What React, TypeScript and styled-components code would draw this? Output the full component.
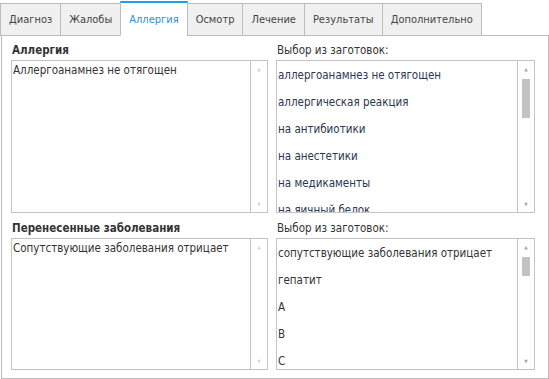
import React from 'react';
import styled, { createGlobalStyle } from 'styled-components';

const GlobalStyle = createGlobalStyle`
  html, body {
    margin: 0;
    padding: 0;
    background: #fff;
  }
  body {
    font-family: "DejaVu Sans Condensed", "DejaVu Sans", sans-serif;
    font-size: 11.5px;
    color: #333;
  }
`;

const tabs = ['Диагноз', 'Жалобы', 'Аллергия', 'Осмотр', 'Лечение', 'Результаты', 'Дополнительно'];

const sections = [
  {
    title: 'Аллергия',
    text: 'Аллергоанамнез не отягощен',
    height: 153,
    thumb: { top: 18, height: 39 },
    items: ['аллергоанамнез не отягощен', 'аллергическая реакция', 'на антибиотики', 'на анестетики', 'на медикаменты', 'на яичный белок'],
    navy: true,
  },
  {
    title: 'Перенесенные заболевания',
    text: 'Сопутствующие заболевания отрицает',
    height: 132,
    thumb: { top: 18, height: 19 },
    items: ['сопутствующие заболевания отрицает', 'гепатит', 'A', 'B', 'C'],
    navy: false,
  },
];

export default function App() {
  return (
    <>
      <GlobalStyle />
      <Wrapper>
        <TabBar>
          {tabs.map((t) => (
            <Tab key={t} $active={t === 'Аллергия'}>{t}</Tab>
          ))}
        </TabBar>
        <Panel>
          {sections.map((s) => (
            <Section key={s.title}>
              <Label $bold>{s.title}</Label>
              <Label>Выбор из заготовок:</Label>
              <Box style={{ height: s.height }}>
                <TextArea>{s.text}</TextArea>
                <ScrollBar>
                  <Arrow $faded>▲</Arrow>
                  <Arrow $faded>▼</Arrow>
                </ScrollBar>
              </Box>
              <Box style={{ height: s.height }}>
                <List $navy={s.navy}>
                  {s.items.map((i) => (
                    <Item key={i}>{i}</Item>
                  ))}
                </List>
                <ScrollBar>
                  <Arrow>▲</Arrow>
                  <Thumb style={{ top: s.thumb.top, height: s.thumb.height }} />
                  <Arrow>▼</Arrow>
                </ScrollBar>
              </Box>
            </Section>
          ))}
        </Panel>
      </Wrapper>
    </>
  );
}

const Wrapper = styled.div`
  width: 549px;
  height: 379px;
  display: flex;
  flex-direction: column;
`;

const TabBar = styled.div`
  display: flex;
  align-items: flex-end;
  height: 35px;
  position: relative;
  z-index: 1;
`;

const Tab = styled.div<{ $active?: boolean }>`
  height: ${(p) => (p.$active ? '35px' : '33px')};
  box-sizing: border-box;
  display: flex;
  align-items: center;
  padding: 0 8px;
  margin-right: -1px;
  margin-bottom: -1px;
  font-size: 11px;
  color: ${(p) => (p.$active ? '#2d8fe0' : '#444')};
  background: ${(p) => (p.$active ? '#fff' : '#f0f0f0')};
  border: 1px solid #bcbcbc;
  border-top: ${(p) => (p.$active ? '2px solid #1ea0ea' : '1px solid #bcbcbc')};
  border-bottom: ${(p) => (p.$active ? '1px solid #fff' : '1px solid #bcbcbc')};
`;

const Panel = styled.div`
  margin-left: 1px;
  width: 548px;
  height: 344px;
  box-sizing: border-box;
  border: 1px solid #bcbcbc;
  padding: 5px 13px 0 9px;
  display: flex;
  flex-direction: column;
  gap: 6px;
`;

const Section = styled.div`
  display: grid;
  grid-template-columns: 257px 259px;
  column-gap: 8px;
`;

const Label = styled.div<{ $bold?: boolean }>`
  height: 19px;
  line-height: 19px;
  padding-left: 1px;
  font-weight: ${(p) => (p.$bold ? 'bold' : 'normal')};
  color: #333;
`;

const Box = styled.div`
  display: flex;
  box-sizing: border-box;
  border: 1px solid #c4c4c4;
  background: #fff;
  overflow: hidden;
`;

const TextArea = styled.div`
  flex: 1;
  padding: 2px 1px;
  line-height: 14px;
  color: #333;
`;

const List = styled.div<{ $navy?: boolean }>`
  flex: 1;
  padding: 7px 1px 0;
  color: ${(p) => (p.$navy ? '#2c3652' : '#333')};
`;

const Item = styled.div`
  height: 27px;
  line-height: 14px;
  white-space: nowrap;
`;

const ScrollBar = styled.div`
  width: 17px;
  flex: none;
  border-left: 1px solid #c4c4c4;
  position: relative;
  display: flex;
  flex-direction: column;
  justify-content: space-between;
  align-items: center;
  padding: 5px 0;
  box-sizing: border-box;
`;

const Arrow = styled.span<{ $faded?: boolean }>`
  font-size: 5px;
  line-height: 6px;
  color: ${(p) => (p.$faded ? '#d6d6d6' : '#a8a8a8')};
`;

const Thumb = styled.div`
  position: absolute;
  left: 4px;
  width: 8px;
  background: #c2c2c2;
`;
